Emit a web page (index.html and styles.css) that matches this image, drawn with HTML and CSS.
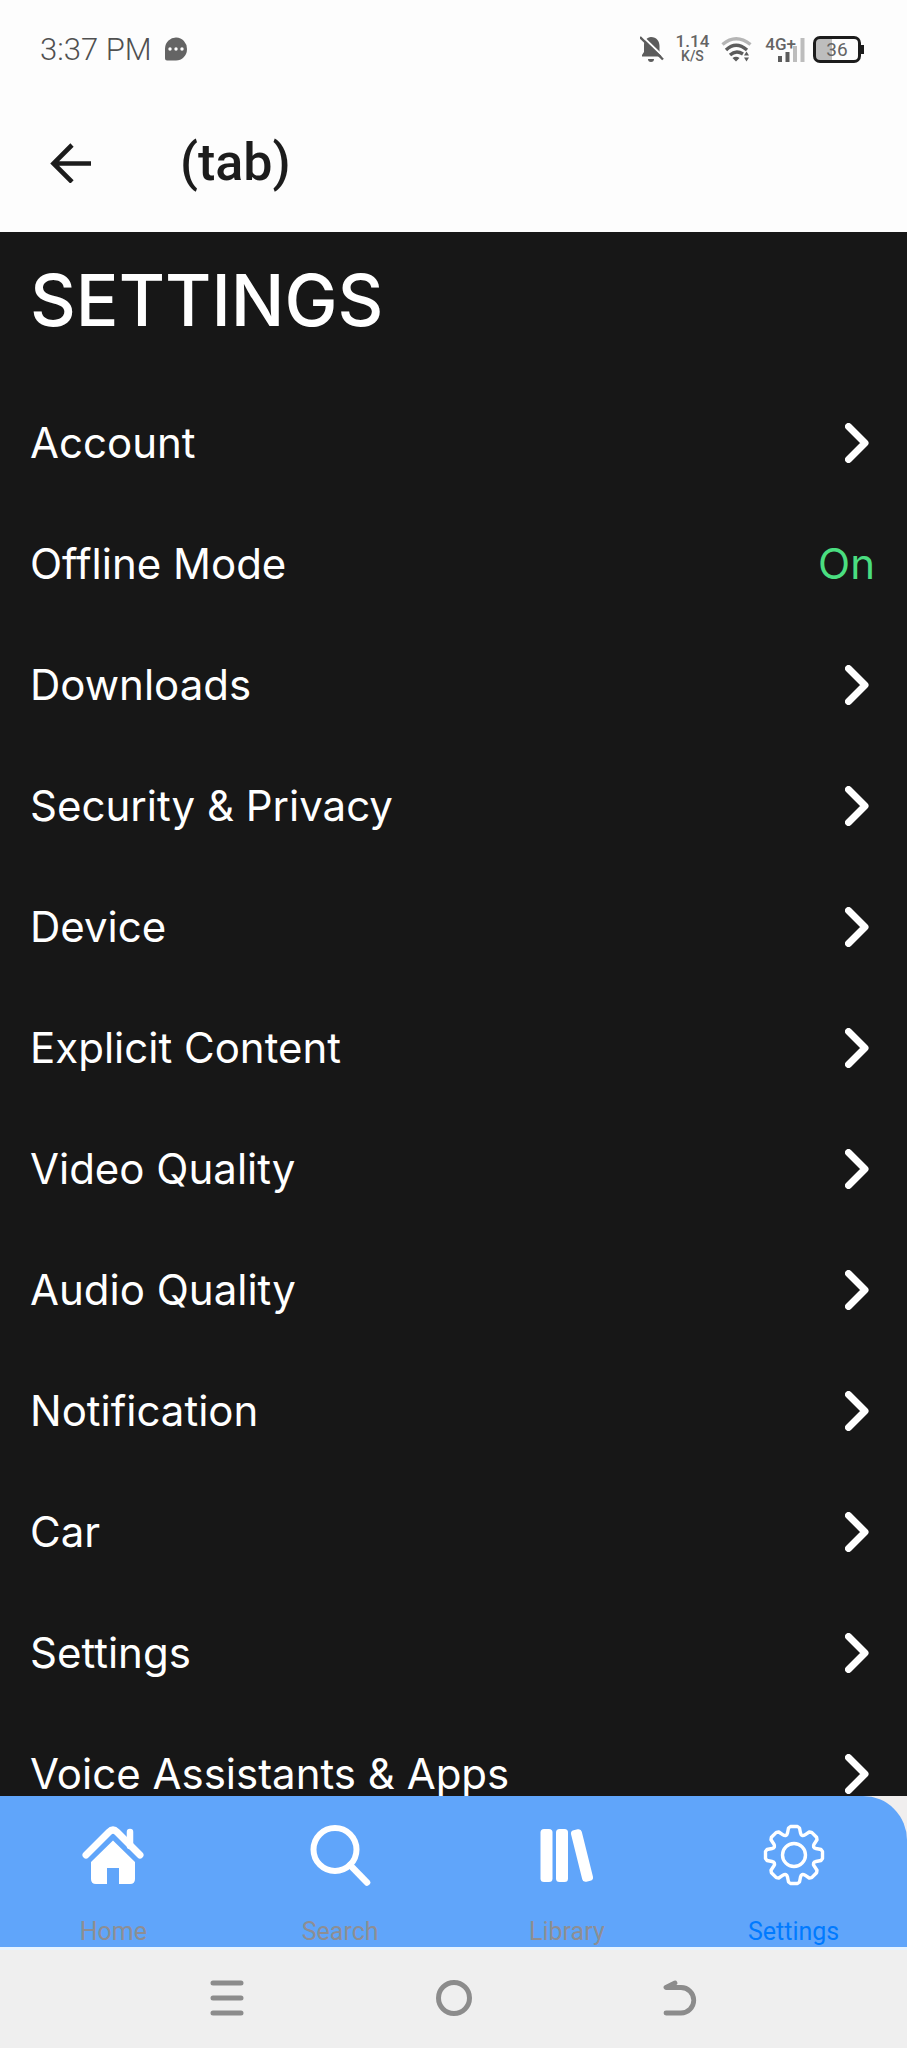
FILE: index.html
```html
<!DOCTYPE html>
<html lang="en">
<head>
<meta charset="utf-8">
<meta name="viewport" content="width=device-width, initial-scale=1">
<title>Settings</title>
<link rel="stylesheet" href="styles.css">
</head>
<body>
<svg class="defs" width="0" height="0" aria-hidden="true">
  <symbol id="chevron" viewBox="0 0 24 40"><path d="M3.500 3.500 20 20 3.500 36.500" fill="none" stroke="#fff" stroke-width="7" stroke-linecap="round" stroke-linejoin="round"/></symbol>
</svg>
<div class="screen">
  <div class="status">
    <span class="time">3:37 PM</span>
    <svg class="bubble" viewBox="0 0 22 24" aria-hidden="true"><path d="M0 11.500A11 11.500 0 1 1 11 23.500H2a2 2 0 0 1-2-2z" fill="#646464"/><g fill="#fff"><circle cx="5" cy="12" r="1.700"/><circle cx="11" cy="12" r="1.700"/><circle cx="17" cy="12" r="1.700"/></g></svg>
    <div class="indicators">
      <svg class="bell" viewBox="0 0 24 26" aria-hidden="true"><path d="M11 1c5.500 0 8.500 4 8.500 9v6l3 4.500H2V19l2-3V9c0-4 3-8 7-8z" fill="#5c5c5c"/><path d="M8 23h6a3 3 0 0 1-6 0z" fill="#5c5c5c"/><path d="M1 -1 25 22" stroke="#fff" stroke-width="2"/><path d="M0 1 23 23.500" stroke="#5c5c5c" stroke-width="2.400"/></svg>
      <div class="speed"><span class="rate">1.14</span><span class="unit">K/S</span></div>
      <svg class="wifi" viewBox="0 0 32 26" aria-hidden="true"><g fill="none" stroke-width="3.400"><path d="M1.500 8.500Q15 -3 29.500 8.500" stroke="#b5b5b5"/><path d="M5 14Q15 4.500 26 14" stroke="#5c5c5c"/><path d="M9 19Q15 13.500 22 18" stroke="#5c5c5c"/></g><path d="M11.500 22q3.500-2.500 7 0L15 25.500zM23 19.500l2.500-4 2.500 4zM23 21.500l2.500 4 2.500-4z" fill="#5c5c5c"/></svg>
      <div class="cell"><span class="network">4G+</span>
        <svg class="bars" viewBox="0 0 27 25" aria-hidden="true"><path d="M0 19h4v6H0zM7.500 15h4v10h-4z" fill="#5c5c5c"/><path d="M15 9h4v16h-4zM22.500 1h4v24h-4z" fill="#bdbdbd"/></svg></div>
      <div class="battery"><span class="level">36</span></div>
    </div>
  </div>
  <header class="header">
    <button class="back" type="button" aria-label="Back"><svg viewBox="0 0 42 40" aria-hidden="true"><path d="M41 20.500H4M22 2 3.500 20.500 22 39" fill="none" stroke="#1c1c1c" stroke-width="4.600"/></svg></button>
    <span class="title">(tab)</span>
  </header>
  <main class="content">
    <h1 class="heading">SETTINGS</h1>
    <nav class="list" aria-label="Settings sections">
      <a class="row" href="#account">Account<svg class="chevron" aria-hidden="true"><use href="#chevron"/></svg></a>
      <button class="row" type="button">Offline Mode<span class="on">On</span></button>
      <a class="row" href="#downloads">Downloads<svg class="chevron" aria-hidden="true"><use href="#chevron"/></svg></a>
      <a class="row" href="#security">Security &amp; Privacy<svg class="chevron" aria-hidden="true"><use href="#chevron"/></svg></a>
      <a class="row" href="#device">Device<svg class="chevron" aria-hidden="true"><use href="#chevron"/></svg></a>
      <a class="row" href="#explicit">Explicit Content<svg class="chevron" aria-hidden="true"><use href="#chevron"/></svg></a>
      <a class="row" href="#video">Video Quality<svg class="chevron" aria-hidden="true"><use href="#chevron"/></svg></a>
      <a class="row" href="#audio">Audio Quality<svg class="chevron" aria-hidden="true"><use href="#chevron"/></svg></a>
      <a class="row" href="#notification">Notification<svg class="chevron" aria-hidden="true"><use href="#chevron"/></svg></a>
      <a class="row" href="#car">Car<svg class="chevron" aria-hidden="true"><use href="#chevron"/></svg></a>
      <a class="row" href="#settings">Settings<svg class="chevron" aria-hidden="true"><use href="#chevron"/></svg></a>
      <a class="row" href="#voice">Voice Assistants &amp; Apps<svg class="chevron" aria-hidden="true"><use href="#chevron"/></svg></a>
    </nav>
  </main>
  <div class="tabwrap">
    <nav class="tabs" aria-label="Main">
      <a class="tab" href="#home"><svg viewBox="0 0 62 62" aria-hidden="true"><path d="M4 31 27 8Q31 4 35 8L58 31" fill="none" stroke="#fff" stroke-width="7" stroke-linecap="round" stroke-linejoin="round"/><path d="M48 8v14" stroke="#fff" stroke-width="6.500" stroke-linecap="round"/><path d="M31 16.500 53 38v17q0 5-5 5H37V44H25v16H14q-5 0-5-5V38z" fill="#fff"/></svg>Home</a>
      <a class="tab" href="#search"><svg viewBox="0 0 62 62" aria-hidden="true"><g fill="none" stroke="#fff"><circle cx="26" cy="25.500" r="21.500" stroke-width="6"/><path d="M41 41 58 58.500" stroke-width="6.500" stroke-linecap="round"/></g></svg>Search</a>
      <a class="tab" href="#library"><svg viewBox="0 0 62 62" aria-hidden="true"><g fill="#fff"><rect x="4.500" y="5" width="12" height="53" rx="3.500"/><rect x="20" y="5" width="12" height="53" rx="3.500"/><rect x="40.500" y="5" width="11" height="53" rx="3.500" transform="rotate(-14 46 31.500)"/></g></svg>Library</a>
      <a class="tab current" href="#settings" aria-current="page"><svg viewBox="-31 -31 62 62" aria-hidden="true"><g fill="none" stroke="#fff" stroke-width="3.400" stroke-linejoin="round"><path d="M-6.500-22-5.500-27-3.500-28.500H3.500L5.500-27 6.500-22Q7.500-18 11-20.200L15.200-23 17.700-22.600 22.600-17.700 23-15.200 20.200-11Q18-7.500 22-6.500L27-5.500 28.500-3.500V3.500L27 5.500 22 6.500Q18 7.500 20.200 11L23 15.200 22.600 17.700 17.700 22.600 15.200 23 11 20.200Q7.500 18 6.500 22L5.500 27 3.500 28.500H-3.500L-5.500 27-6.500 22Q-7.500 18-11 20.200L-15.200 23-17.700 22.600-22.600 17.700-23 15.200-20.200 11Q-18 7.500-22 6.500L-27 5.500-28.500 3.500V-3.500L-27-5.500-22-6.500Q-18-7.500-20.200-11L-23-15.200-22.600-17.700-17.700-22.600-15.200-23-11-20.200Q-7.500-18-6.500-22z"/><circle r="11.500"/></g></svg>Settings</a>
    </nav>
  </div>
  <div class="system">
    <button class="key" type="button" aria-label="Recent apps"><svg viewBox="0 0 36 36" aria-hidden="true"><path d="M4 3h28M4 18h28M4 33h28" stroke="#8c8c8c" stroke-width="5" stroke-linecap="round"/></svg></button>
    <button class="key" type="button" aria-label="Home"><svg viewBox="0 0 36 36" aria-hidden="true"><circle cx="18" cy="18" r="15.500" fill="none" stroke="#8c8c8c" stroke-width="5"/></svg></button>
    <button class="key" type="button" aria-label="Back"><svg viewBox="0 0 36 36" aria-hidden="true"><path d="M13 3 4 7.500H19a12.700 12.700 0 0 1 0 25.500H4" fill="none" stroke="#8c8c8c" stroke-width="4.800" stroke-linecap="round" stroke-linejoin="round"/></svg></button>
  </div>
</div>
</body>
</html>
```
FILE: styles.css
```css
* { box-sizing: border-box; }
body {
  margin: 0;
  font-family: Roboto, "Liberation Sans", sans-serif;
  background: #fdfdfd;
}
button { border: 0; padding: 0; margin: 0; background: none; font: inherit; }
a { color: inherit; text-decoration: none; }
svg { display: block; flex: none; }
.defs { position: absolute; }

.screen { display: flex; flex-direction: column; height: 100vh; }

.status {
  display: flex;
  align-items: center;
  height: 98px;
  padding: 0 40px;
  color: #646464;
}
.time { font-size: 31px; font-weight: 300; color: #505050; }
.bubble { width: 22px; height: 24px; margin-left: 13px; }
.indicators { display: flex; align-items: center; gap: 12px; margin-left: auto; }
.bell { width: 24px; height: 26px; }
.speed { display: flex; flex-direction: column; align-items: center; font-weight: 500; line-height: 15px; }
.rate { font-size: 17px; }
.unit { font-size: 14px; }
.wifi { width: 32px; height: 26px; }
.cell { display: flex; }
.network { font-size: 17px; font-weight: 500; line-height: 14px; }
.bars { width: 27px; height: 25px; margin-left: -18px; }
.battery {
  position: relative;
  width: 48px;
  height: 27px;
  border: 3px solid #1c1c1c;
  border-radius: 7px;
  background: linear-gradient(90deg, #bdbdbd 16px, transparent 16px);
  margin-right: 6px;
  margin-left: -4px;
  text-align: center;
}
.battery::after {
  content: "";
  position: absolute;
  top: 6px;
  right: -6px;
  width: 3px;
  height: 9px;
  background: #1c1c1c;
}
.level { display: block; font-size: 19px; line-height: 22px; }

.header {
  display: flex;
  align-items: center;
  gap: 88px;
  height: 134px;
  padding: 0 50px 5px;
  color: #1c1c1c;
}
.back svg { width: 42px; height: 40px; }
.title { font-size: 52px; font-weight: 500; line-height: 60px; }

.content {
  flex: 1;
  min-height: 0;
  overflow: hidden;
  background: #171717;
  color: #fff;
  font-family: Inter, "Open Sans", sans-serif;
}
.heading { margin: 0; padding: 24px 30px 38px; font-size: 71px; font-weight: 500; line-height: 88px; }
.row {
  display: flex;
  align-items: center;
  justify-content: space-between;
  width: 100%;
  height: 121px;
  padding: 0 32px 0 30px;
  color: #fff;
  font-size: 42px;
  line-height: 60px;
}
.chevron { width: 24px; height: 40px; margin-right: 6px; }
.on { color: #4ade80; }

.tabwrap { background: #f0eeee; }
.tabs {
  display: flex;
  height: 151px;
  background: #60a5fa;
  border-top-right-radius: 44px;
}
.tab {
  flex: 1;
  display: flex;
  flex-direction: column;
  align-items: center;
  gap: 32px;
  padding-top: 28px;
  color: #8e8e93;
  font-size: 25px;
  line-height: 28px;
}
.tab svg { width: 62px; height: 62px; }
.current { color: #007aff; }

.system {
  display: flex;
  justify-content: center;
  height: 101px;
  padding-bottom: 3px;
  background: #efefef;
  border-top: 3px solid #e6f3ff;
}
.key { display: flex; align-items: center; justify-content: center; width: 25%; }
.key svg { width: 36px; height: 36px; }
```
